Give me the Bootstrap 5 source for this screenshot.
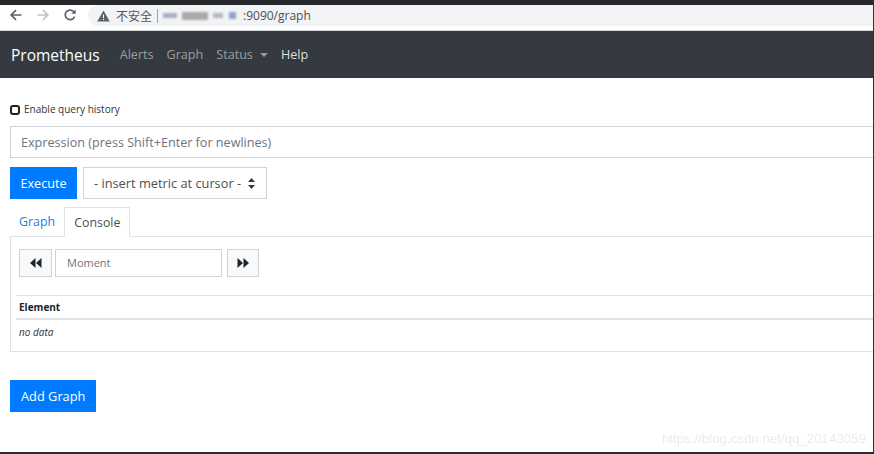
<!doctype html>
<html lang="zh">
<head>
<meta charset="utf-8">
<title>Prometheus Time Series Collection and Processing Server</title>
<link rel="stylesheet" href="https://cdn.jsdelivr.net/npm/bootstrap@5.3.0/dist/css/bootstrap.min.css">
<style>
html,body{height:100%;overflow:hidden;}
body{font-family:"Open Sans","Noto Sans",sans-serif;background:#fff;color:#212529;}
.shot{height:454px;width:874px;display:flex;flex-direction:column;border-bottom:2px solid #2a2a2a;border-right:1px solid #333;position:relative;overflow:hidden;}
.topstrip{height:5px;background:#26282b;flex:none;}
.chrome{height:26px;flex:none;background:#fff;display:flex;align-items:flex-start;padding:0 0 0 9px;border-bottom:1px solid #d5d8da;}
.chrome svg{display:block;flex:none;}
.ico-back,.ico-fwd,.ico-rel{margin-top:3px;}
.ico-fwd{margin-left:13px;}
.ico-rel{margin-left:13px;}
.omni{margin-left:11px;height:21px;flex:1;border-radius:11px 0 0 11px;background:#f1f3f4;display:flex;align-items:center;padding-left:9px;font-size:12px;color:#444;}
.unsafe{font-family:"Noto Sans CJK SC",sans-serif;font-size:12px;color:#555;margin-left:6px;}
.sep{width:1px;height:14px;background:#9aa0a6;margin:0 5px;}
.blurred{display:flex;align-items:center;gap:5px;filter:blur(1.3px);width:80px;}
.blurred i{display:block;height:5px;background:#a9b0c4;}
.blurred i:nth-child(1){width:14px;}
.blurred i:nth-child(2){width:26px;height:8px;background:#aaa;}
.blurred i:nth-child(3){width:10px;background:#b5b8c0;}
.blurred i:nth-child(4){width:7px;height:7px;background:#8fa2c8;margin-left:1px;}
.urltail{font-size:12px;color:#4d5156;}
.pnav{background:#343a40;height:47px;flex:none;padding:2px 11px 0;display:flex;align-items:center;}
.pnav .navbar-brand{font-size:15.5px;color:#fff;padding:0;margin:0 20px 0 0;line-height:1;}
.pnav .nav-link{font-size:12.6px;padding:0;color:rgba(255,255,255,.5);margin-right:13px;line-height:1;}
.pnav .nav-link.hl{color:rgba(255,255,255,.85);}
.pnav .dropdown-toggle::after{margin-left:7px;vertical-align:2px;border-top-width:4px;border-left-width:4px;border-right-width:4px;}
.wrap{flex:1;padding:25px 0 0 10px;min-width:0;}
.histrow{display:flex;align-items:center;height:13px;margin-bottom:10px;font-size:10px;color:#333;}
.hbox{width:10px;height:10px;border:2px solid #222;border-radius:3px;margin-right:4px;flex:none;background:#fff;}
.expr{height:32px;border:1px solid #ced4da;border-right:0;font-size:12.6px;color:#6c757d;display:flex;align-items:center;padding:2px 0 0 10px;margin-bottom:9px;}
.actions{display:flex;gap:6px;margin-bottom:8px;}
.btn-exec{background:#007bff;color:#fff;height:32px;border:0;border-radius:0;font-size:12.6px;padding:1px 10.5px 0;line-height:31px;}
.btn-exec:hover{background:#007bff;color:#fff;}
.btn-add{padding:0 11px;font-size:12.8px;line-height:32px;}
.metric{width:184px;height:32px;border:1px solid #ced4da;font-size:12.8px;color:#495057;display:flex;align-items:center;padding:1px 0 0 10px;position:relative;}
.metric svg{margin-left:7px;}
.tabs-row{display:flex;height:30px;border-bottom:1px solid #dee2e6;font-size:12.4px;}
.tab-a{padding:0 9px;color:#2a7ae2;line-height:29px;}
.tab-b{padding:0 9px;color:#495057;line-height:29px;border:1px solid #dee2e6;border-bottom:0;background:#fff;height:30px;margin-bottom:-1px;}
.panel{border-left:1px solid #dee2e6;border-bottom:1px solid #dee2e6;height:115px;padding-top:12px;}
.ctrls{display:flex;padding-left:8px;gap:3px;height:29px;}
.stepbtn{width:33px;height:28px;border:1px solid #ced4da;background:#f8f9fa;border-radius:0;display:flex;align-items:center;justify-content:center;padding:0;}
.stepbtn.fw{width:32px;}
.stepbtn svg{display:block;}
.moment{width:167px;height:28px;border:1px solid #ced4da;font-size:11px;color:#6c757d;display:flex;align-items:center;padding-left:11px;margin-right:2px;}
.tbl{margin:17px 0 0 5px;font-size:10px;}
.thr{border-top:1px solid #dee2e6;border-bottom:2px solid #dee2e6;height:25px;display:flex;align-items:center;padding-left:3px;font-weight:700;color:#212529;}
.tdr{height:25px;display:flex;align-items:center;padding-left:3px;font-style:italic;color:#333;}
.addg{margin-top:28px;}
.mark-wm{position:absolute;right:7px;bottom:3px;font-family:"Liberation Sans",sans-serif;font-size:13.3px;color:#ececec;filter:blur(.5px);}
</style>
</head>
<body>
<div class="shot">
  <div class="topstrip"></div>
  <div class="chrome">
    <svg class="ico-back" width="14" height="14" viewBox="0 0 14 14"><path d="M12.5 7H2.5M7 2.2 2.2 7 7 11.8" fill="none" stroke="#5f6368" stroke-width="1.7"/></svg>
    <svg class="ico-fwd" width="14" height="14" viewBox="0 0 14 14"><path d="M1.5 7h10M7 2.2 11.8 7 7 11.8" fill="none" stroke="#c0c3c7" stroke-width="1.7"/></svg>
    <svg class="ico-rel" width="14" height="14" viewBox="0 0 14 14"><path d="M11.6 8.5A4.8 4.8 0 1 1 10.4 3.4L12 5" fill="none" stroke="#5f6368" stroke-width="1.7"/><path d="M12.6 1.6V5.8H8.4z" fill="#5f6368"/></svg>
    <div class="omni">
      <svg width="13" height="12" viewBox="0 0 13 12"><path d="M6.5.5 12.8 11.5H.2z" fill="#5f6368"/><path d="M6 4.5h1V8H6zM6 9h1v1H6z" fill="#fff"/></svg>
      <span class="unsafe">不安全</span><span class="sep"></span>
      <span class="blurred"><i></i><i></i><i></i><i></i></span><span class="urltail">:9090/graph</span>
    </div>
  </div>
  <nav class="navbar pnav navbar-dark justify-content-start">
    <a class="navbar-brand" href="#">Prometheus</a>
    <a class="nav-link" href="#">Alerts</a>
    <a class="nav-link" href="#">Graph</a>
    <a class="nav-link dropdown-toggle" href="#">Status</a>
    <a class="nav-link hl" href="#">Help</a>
  </nav>
  <main class="wrap">
    <div class="histrow"><span class="hbox"></span>Enable query history</div>
    <div class="expr">Expression (press Shift+Enter for newlines)</div>
    <div class="actions">
      <button class="btn btn-exec" type="button">Execute</button>
      <div class="metric">- insert metric at cursor -
        <svg width="7" height="11" viewBox="0 0 7 11"><path d="M3.5 0 7 4H0zM3.5 11 0 7h7z" fill="#343a40"/></svg>
      </div>
    </div>
    <div class="tabs-row"><div class="tab-a">Graph</div><div class="tab-b">Console</div></div>
    <div class="panel">
      <div class="ctrls">
        <button class="stepbtn" type="button"><svg width="13" height="10" viewBox="0 0 13 10"><path d="M6.5 0v10L1 5zM12.5 0v10L7 5z" fill="#212529"/></svg></button>
        <div class="moment">Moment</div>
        <button class="stepbtn fw" type="button"><svg width="13" height="10" viewBox="0 0 13 10"><path d="M.5 0v10L6 5zM6.5 0v10L12 5z" fill="#212529"/></svg></button>
      </div>
      <div class="tbl">
        <div class="thr">Element</div>
        <div class="tdr">no data</div>
      </div>
    </div>
    <div class="addg"><button class="btn btn-exec btn-add" type="button">Add Graph</button></div>
  </main>
  <div class="mark-wm">https://blog.csdn.net/qq_20143059</div>
</div>
<script src="https://cdn.jsdelivr.net/npm/bootstrap@5.3.0/dist/js/bootstrap.bundle.min.js"></script>
</body>
</html>
